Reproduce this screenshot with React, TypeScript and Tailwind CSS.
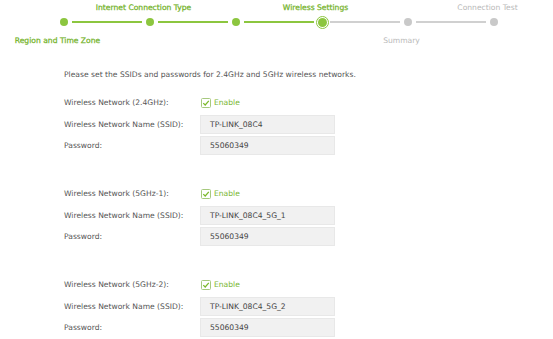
import React from "react";

type Step = { label: string; pos: "top" | "bottom"; state: "done" | "active" | "todo" };

const steps: Step[] = [
  { label: "Region and Time Zone", pos: "bottom", state: "done" },
  { label: "Internet Connection Type", pos: "top", state: "done" },
  { label: "", pos: "bottom", state: "done" },
  { label: "Wireless Settings", pos: "top", state: "active" },
  { label: "Summary", pos: "bottom", state: "todo" },
  { label: "Connection Test", pos: "top", state: "todo" },
];

const networks = [
  { name: "Wireless Network (2.4GHz):", ssid: "TP-LINK_08C4", password: "55060349" },
  { name: "Wireless Network (5GHz-1):", ssid: "TP-LINK_08C4_5G_1", password: "55060349" },
  { name: "Wireless Network (5GHz-2):", ssid: "TP-LINK_08C4_5G_2", password: "55060349" },
];

function CheckIcon() {
  return (
    <svg width="10" height="10" viewBox="0 0 10 10" className="shrink-0">
      <rect x="0.5" y="0.5" width="9" height="9" rx="1" fill="none" stroke="#a6c97e" />
      <path d="M2.3 5.1 L4.2 7 L7.8 2.8" fill="none" stroke="#7ab929" strokeWidth="1.2" />
    </svg>
  );
}

function StepLabel({ step }: { step: Step }) {
  const color = step.state === "todo" ? "text-[#b9b9b9]" : "text-[#74b32a] [-webkit-text-stroke:0.25px_#74b32a]";
  return (
    <div className={`flex justify-center whitespace-nowrap text-[7.6px] ${color}`}>{step.label}</div>
  );
}

function Stepper() {
  return (
    <div className="h-[48px] pt-[1px]">
      <div className="grid grid-cols-[repeat(6,86px)] ml-[14.5px] h-[13px] items-center">
        {steps.map((s, i) => (
          <div key={i}>{s.pos === "top" && <StepLabel step={s} />}</div>
        ))}
      </div>
      <div className="flex items-center h-[16px] ml-[56px]">
        {steps.map((s, i) => (
          <React.Fragment key={i}>
            <div className="w-[16px] h-[16px] flex items-center justify-center">
              {s.state === "active" ? (
                <div className="w-[13px] h-[13px] rounded-full border border-[#8cc63f] bg-white flex items-center justify-center">
                  <div className="w-[9px] h-[9px] rounded-full bg-[#8cc63f]" />
                </div>
              ) : (
                <div
                  className={`w-[8px] h-[8px] rounded-full ${
                    s.state === "done" ? "bg-[#8cc63f]" : "bg-[#c9c9c9]"
                  }`}
                />
              )}
            </div>
            {i < steps.length - 1 && (
              <div
                className={`w-[70px] h-[2px] ${i < 3 ? "bg-[#8cc63f]" : "bg-[#d0d0d0]"}`}
              />
            )}
          </React.Fragment>
        ))}
      </div>
      <div className="grid grid-cols-[repeat(6,86px)] ml-[14.5px] h-[18px] pt-[3px] items-center">
        {steps.map((s, i) => (
          <div key={i}>{s.pos === "bottom" && <StepLabel step={s} />}</div>
        ))}
      </div>
    </div>
  );
}

function Field({ label, value }: { label: string; value: string }) {
  return (
    <div className="flex items-center">
      <div className="w-[136px]">{label}</div>
      <div className="w-[135px] h-[19px] bg-[#f1f1f1] border border-[#e8e8e8] flex items-center pl-[9px] text-[#444]">
        {value}
      </div>
    </div>
  );
}

export default function App() {
  return (
    <div
      className="w-[553px] h-[339px] bg-white overflow-hidden text-[7.6px] text-[#555]"
      style={{ fontFamily: "'DejaVu Sans', Verdana, sans-serif" }}
    >
      <Stepper />
      <div className="pl-[64px] pt-[20px]">
        <div className="h-[14px] flex items-center whitespace-nowrap">
          Please set the SSIDs and passwords for 2.4GHz and 5GHz wireless networks.
        </div>
        <div className="flex flex-col gap-[29px] mt-[11px]">
          {networks.map((n) => (
            <div key={n.name} className="flex flex-col">
              <div className="flex items-center h-[19px] mb-[3px]">
                <div className="w-[137px]">{n.name}</div>
                <CheckIcon />
                <span className="ml-[3px] text-[#79b62f]">Enable</span>
              </div>
              <div className="flex flex-col gap-[2px]">
                <Field label="Wireless Network Name (SSID):" value={n.ssid} />
                <Field label="Password:" value={n.password} />
              </div>
            </div>
          ))}
        </div>
      </div>
    </div>
  );
}
